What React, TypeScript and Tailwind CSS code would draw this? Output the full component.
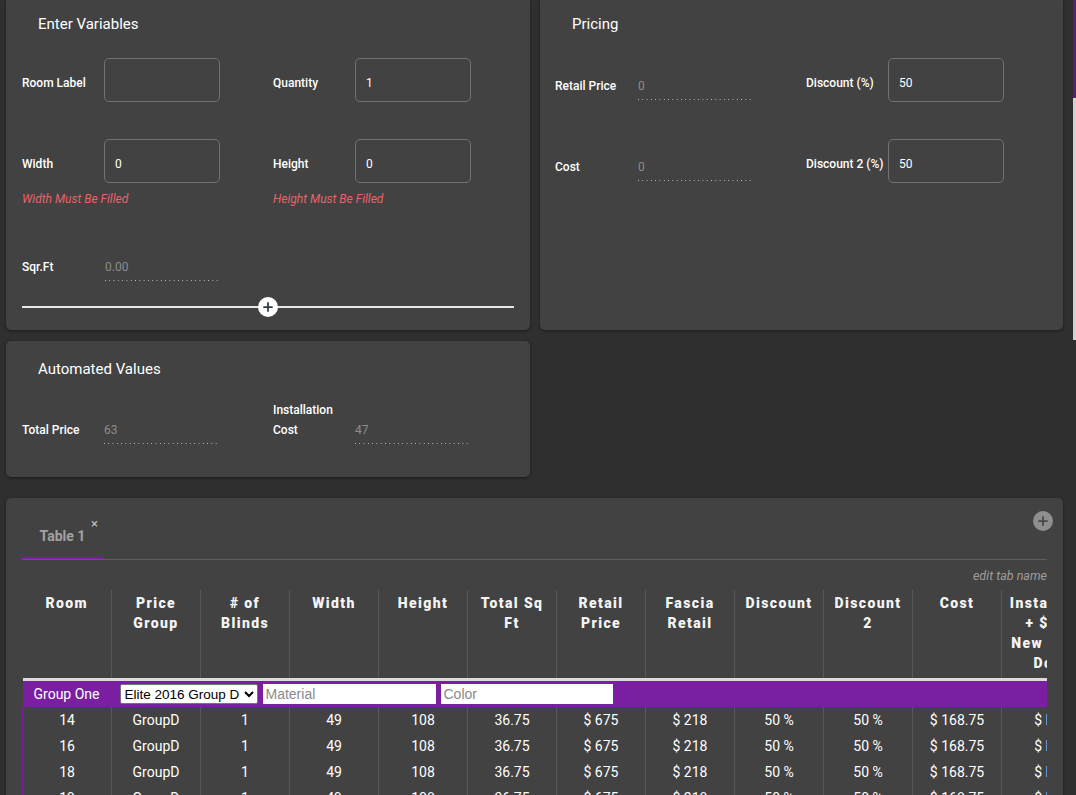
import { Plus } from 'lucide-react'

const HEADERS: string[][] = [
  ['Room'],
  ['Price', 'Group'],
  ['# of', 'Blinds'],
  ['Width'],
  ['Height'],
  ['Total Sq', 'Ft'],
  ['Retail', 'Price'],
  ['Fascia', 'Retail'],
  ['Discount'],
  ['Discount', '2'],
  ['Cost'],
  ['Installation', '+ $ 100', 'New Blinds', 'Down'],
]

const ROWS = ['14', '16', '18', '19', '20'].map(room => [
  room, 'GroupD', '1', '49', '108', '36.75', '$ 675', '$ 218', '50 %', '50 %', '$ 168.75', '$ NaN',
])

function Dots() {
  return <div className="h-px bg-[linear-gradient(to_right,#c4c4c4_1px,transparent_1px)] bg-[length:4.3px_1px] bg-repeat-x" />
}

function Field({ label, value }: { label: string; value: string }) {
  return (
    <div className="flex items-center">
      <span className="w-[82px] pt-[6px] text-xs font-medium">{label}</span>
      <input
        readOnly
        defaultValue={value}
        className="w-[116px] h-[44px] rounded-[5px] border border-[#727272] bg-transparent pl-[10px] pt-[6px] text-xs text-white outline-none"
      />
    </div>
  )
}

function Display({ label, value }: { label: string; value: string }) {
  return (
    <div className="flex items-start">
      <span className="w-[83px] pt-5 text-xs leading-4 font-medium">{label}</span>
      <div className="w-[113px] pt-5">
        <div className="h-[21px] text-xs leading-4 text-[#8c8c8c]">{value}</div>
        <Dots />
      </div>
    </div>
  )
}

export default function App() {
  return (
    <div className="flex min-h-screen bg-[#2f2f2f] text-white font-['Roboto',sans-serif]">
      <div className="w-[1073px] pl-[6px] pr-[10px] pb-10">
        <div className="grid grid-cols-[524px_523px] gap-x-[10px]">
          {/* Enter Variables */}
          <div className="bg-[#424242] rounded-b-[5px] shadow-[0_1px_3px_rgba(0,0,0,0.45)] px-4 pt-[15px] pb-[13px]">
            <h2 className="pl-4 text-[15px] leading-[18px] font-normal">Enter Variables</h2>
            <div className="grid grid-cols-[251px_1fr] mt-[25px]">
              <Field label="Room Label" value="" />
              <Field label="Quantity" value="1" />
            </div>
            <div className="grid grid-cols-[251px_1fr] mt-[37px]">
              <Field label="Width" value="0" />
              <Field label="Height" value="0" />
            </div>
            <div className="grid grid-cols-[251px_1fr] mt-2 text-xs leading-4 italic text-[#e8636a]">
              <span>Width Must Be Filled</span>
              <span>Height Must Be Filled</span>
            </div>
            <div className="mt-[32px]">
              <Display label="Sqr.Ft" value="0.00" />
            </div>
            <div className="relative mt-[16px] h-5 flex items-center">
              <div className="h-[2px] w-full bg-[#e6e6e6]" />
              <div className="absolute left-1/2 -translate-x-1/2 w-5 h-5 rounded-full bg-white flex items-center justify-center">
                <Plus size={14} strokeWidth={3} className="text-[#2f3a48]" />
              </div>
            </div>
          </div>

          {/* Pricing */}
          <div className="bg-[#424242] rounded-b-[5px] shadow-[0_1px_3px_rgba(0,0,0,0.45)] pl-[15px] pr-4 pt-[15px]">
            <h2 className="pl-[17px] text-[15px] leading-[18px] font-normal">Pricing</h2>
            <div className="grid grid-cols-[251px_1fr] mt-[25px]">
              <Display label="Retail Price" value="0" />
              <Field label="Discount (%)" value="50" />
            </div>
            <div className="grid grid-cols-[251px_1fr] mt-[37px]">
              <Display label="Cost" value="0" />
              <Field label="Discount 2 (%)" value="50" />
            </div>
          </div>
        </div>

        {/* Automated Values */}
        <div className="mt-[11px] w-[524px] bg-[#424242] rounded-[5px] shadow-[0_1px_3px_rgba(0,0,0,0.45)] px-4 pt-[19px] pb-[33px]">
          <h2 className="pl-4 text-[15px] leading-[18px] font-normal">Automated Values</h2>
          <div className="grid grid-cols-[251px_1fr] mt-[22px] items-end">
            <div className="flex items-end">
              <span className="w-[82px] pb-1 text-xs leading-5 font-medium">Total Price</span>
              <div className="w-[113px]">
                <div className="h-[21px] text-xs leading-4 text-[#8c8c8c]">63</div>
                <Dots />
              </div>
            </div>
            <div className="flex items-end">
              <span className="w-[82px] pb-1 text-xs leading-5 font-medium">Installation<br />Cost</span>
              <div className="w-[113px]">
                <div className="h-[21px] text-xs leading-4 text-[#8c8c8c]">47</div>
                <Dots />
              </div>
            </div>
          </div>
        </div>

        {/* Tables */}
        <div className="relative mt-[21px] bg-[#424242] rounded-[5px] shadow-[0_1px_3px_rgba(0,0,0,0.45)] px-4 pt-4">
          <button className="absolute right-[10px] top-[13px] w-5 h-5 rounded-full bg-[#8e8e8e] flex items-center justify-center">
            <Plus size={14} strokeWidth={3} className="text-[#46464e]" />
          </button>
          <div className="relative flex border-b border-[#5e5e5e]">
            <div className="w-[81px] h-[45px] pt-3 text-center text-sm leading-5 font-bold text-[#a3a3a3] border-b-2 border-[#7b1fa2]">
              Table 1
            </div>
            <span className="absolute left-[69px] top-[2px] text-[13px] leading-4 text-[#c2c2c2]">×</span>
          </div>
          <div className="mt-2 text-right text-[12.5px] leading-4 italic text-[#9c9c9c]">edit tab name</div>

          <div className="mt-[6px] overflow-hidden">
            <table className="table-fixed border-collapse w-[1083px]">
              <colgroup>
                {HEADERS.map((_, i) => (
                  <col key={i} className={i === 11 ? 'w-[104px]' : 'w-[89px]'} />
                ))}
              </colgroup>
              <thead>
                <tr>
                  {HEADERS.map((lines, i) => (
                    <th
                      key={i}
                      className={`align-top pt-[3px] pb-[5px] text-center text-sm leading-5 font-black tracking-[0.1em] text-[#f4f4f4] ${i > 0 ? 'border-l border-[#585858]' : ''}`}
                    >
                      {lines.map((l, j) => (
                        <div key={j} className="whitespace-nowrap">{l}</div>
                      ))}
                    </th>
                  ))}
                </tr>
              </thead>
              <tbody>
                <tr>
                  <td colSpan={12} className="p-0">
                    <div className="h-[3px] bg-[#dcdcdc]" />
                    <div className="h-[26px] bg-[#7b1fa2] flex items-center gap-[5px]">
                      <span className="w-[92px] pl-[11px] text-sm">Group One</span>
                      <select className="w-[138px] h-[20px] pl-0 bg-white text-black border border-[#767676] rounded-[2px] text-[13.5px] leading-4 font-['Liberation_Sans',Arial,sans-serif]">
                        <option>Elite 2016 Group D</option>
                      </select>
                      <input
                        placeholder="Material"
                        className="w-[173px] h-[20px] bg-white text-black px-[3px] text-[14px] font-['Liberation_Sans',Arial,sans-serif] placeholder:text-[#8a8a8a] outline-none"
                      />
                      <input
                        placeholder="Color"
                        className="w-[172px] h-[20px] bg-white text-black px-[3px] text-[14px] font-['Liberation_Sans',Arial,sans-serif] placeholder:text-[#8a8a8a] outline-none"
                      />
                    </div>
                  </td>
                </tr>
                {ROWS.map((row, r) => (
                  <tr key={r}>
                    {row.map((cell, i) => (
                      <td
                        key={i}
                        className={`h-[26px] p-0 text-center text-sm whitespace-nowrap ${i === 0 ? 'border-l border-[#7b1fa2]' : 'border-l border-[#585858]'}`}
                      >
                        {cell}
                      </td>
                    ))}
                  </tr>
                ))}
              </tbody>
            </table>
          </div>
        </div>
      </div>

      {/* right edge strip */}
      <div className="w-[3px] flex flex-col">
        <div className="h-[98px] bg-[#5b1a80]" />
        <div className="h-[242px] bg-[#d3d3d3]" />
      </div>
    </div>
  )
}
